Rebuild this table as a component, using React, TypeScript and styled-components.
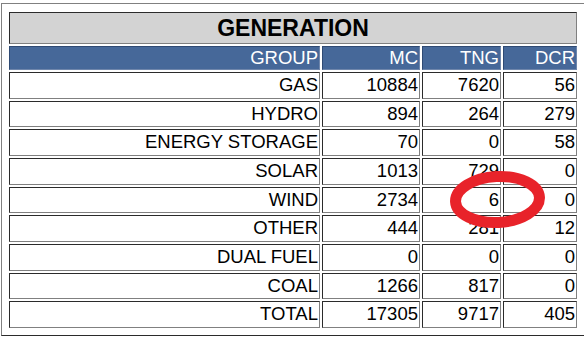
import React from "react";
import styled, { createGlobalStyle } from "styled-components";

const rows: [string, number, number, number][] = [
  ["GAS", 10884, 7620, 56],
  ["HYDRO", 894, 264, 279],
  ["ENERGY STORAGE", 70, 0, 58],
  ["SOLAR", 1013, 729, 0],
  ["WIND", 2734, 6, 0],
  ["OTHER", 444, 281, 12],
  ["DUAL FUEL", 0, 0, 0],
  ["COAL", 1266, 817, 0],
  ["TOTAL", 17305, 9717, 405],
];

const GlobalStyle = createGlobalStyle`
  body {
    margin: 0;
    background: #ffffff;
    font-family: "Liberation Sans", Arial, sans-serif;
  }
`;

const Page = styled.div`
  position: relative;
  padding: 3px 0 0 1px;
  width: 584px;
  height: 341px;
  box-sizing: border-box;
  overflow: hidden;
`;

const Table = styled.table`
  table-layout: fixed;
  width: 584px;
  border-collapse: separate;
  border-spacing: 2px;
  padding: 6px 5px 5px 5px;
  border: 1px solid;
  border-color: #808080 #2b2b2b #2b2b2b #808080;
`;

const Cell = styled.td`
  border: 1px solid;
  border-color: #2b2b2b #808080 #808080 #2b2b2b;
  padding: 1px 1px 1px 1px;
  text-align: right;
  font-size: 18.5px;
  line-height: 22.67px;
  color: #000000;
  white-space: nowrap;
  overflow: hidden;
`;

const Title = styled.th`
  border: 1px solid;
  border-color: #2b2b2b #808080 #808080 #2b2b2b;
  background: #d3d3d3;
  padding: 1px;
  font-size: 23px;
  line-height: 28px;
  font-weight: bold;
  color: #000000;
  text-align: center;
`;

const Head = styled.th`
  border: 1px solid;
  border-color: #2f4a73 #6f86ab #6f86ab #2f4a73;
  background: #466899;
  padding: 1px;
  font-size: 18.5px;
  line-height: 20px;
  font-weight: normal;
  color: #ffffff;
  text-align: right;
`;

const Mark = styled.svg`
  position: absolute;
  top: 0;
  left: 0;
  pointer-events: none;
`;

export default function App() {
  return (
    <Page>
      <GlobalStyle />
      <Table>
        <colgroup>
          <col style={{ width: 311 }} />
          <col style={{ width: 98 }} />
          <col style={{ width: 79 }} />
          <col style={{ width: 74 }} />
        </colgroup>
        <thead>
          <tr>
            <Title colSpan={4}>GENERATION</Title>
          </tr>
          <tr>
            <Head>GROUP</Head>
            <Head>MC</Head>
            <Head>TNG</Head>
            <Head>DCR</Head>
          </tr>
        </thead>
        <tbody>
          {rows.map(([group, mc, tng, dcr]) => (
            <tr key={group}>
              <Cell>{group}</Cell>
              <Cell>{mc}</Cell>
              <Cell>{tng}</Cell>
              <Cell>{dcr}</Cell>
            </tr>
          ))}
        </tbody>
      </Table>
      <Mark width="584" height="341" viewBox="0 0 584 341">
        <ellipse
          cx="497.5"
          cy="199.5"
          rx="42"
          ry="23"
          fill="none"
          stroke="#e8232a"
          strokeWidth="11"
          transform="rotate(-3 497.5 199.5)"
        />
      </Mark>
    </Page>
  );
}
